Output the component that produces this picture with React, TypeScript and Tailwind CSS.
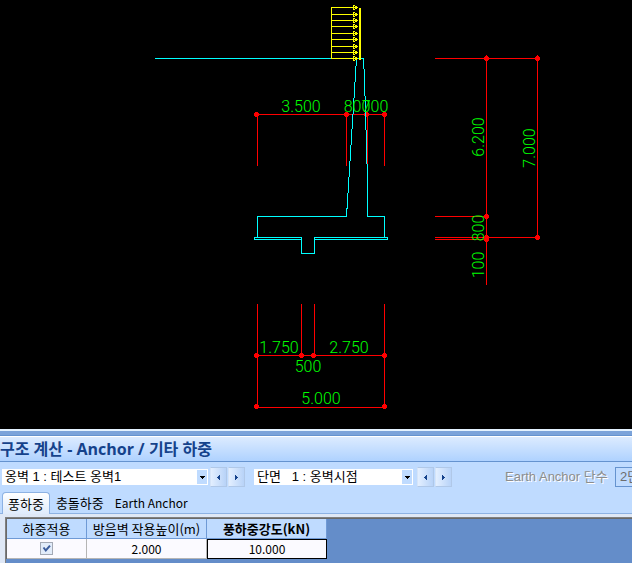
import { useState } from 'react';
import type { ReactNode } from 'react';

type Point = [number, number];

const WIND_ROWS = [7, 14, 20, 26, 33, 39, 46, 52, 58];

// x1, y1, x2, y2
const DIM_LINES = [
  // top
  [257, 114, 384, 114],
  [257, 114, 257, 165],
  [346, 114, 346, 165],
  [367, 114, 367, 165],
  [384, 114, 384, 165],
  // bottom
  [257, 355, 384, 355],
  [257, 407, 384, 407],
  [257, 304, 257, 407],
  [301, 304, 301, 355],
  [314, 304, 314, 355],
  [384, 304, 384, 407],
  // right
  [435, 58, 537, 58],
  [435, 216, 486, 216],
  [435, 237, 537, 237],
  [435, 239, 486, 239],
  [486, 55, 486, 284],
  [537, 55, 537, 239],
];

const DIM_DOTS: Point[] = [
  [256, 114], [346, 114], [366, 114], [384, 114],
  [256, 355], [301, 355], [313, 355], [384, 355],
  [256, 406], [384, 406],
  [486, 58], [537, 58], [486, 216], [486, 237], [486, 239], [537, 237],
];

const DIM_LABELS = [
  { x: 301, y: 112, text: '3.500' },
  { x: 357, y: 112, text: '800' },
  { x: 375, y: 112, text: '700' },
  { x: 279, y: 353, text: '1.750' },
  { x: 308, y: 372, text: '500' },
  { x: 349, y: 353, text: '2.750' },
  { x: 321, y: 404, text: '5.000' },
  { x: 484, y: 137, text: '6.200', vertical: true },
  { x: 535, y: 148, text: '7.000', vertical: true },
  { x: 484, y: 228, text: '800', vertical: true },
  { x: 484, y: 265, text: '100', vertical: true },
];

function SectionDrawing() {
  return (
    <svg viewBox="0 0 632 429" className="block h-[429px] w-full shrink-0 bg-black" role="img" aria-label="옹벽 단면">
      <g transform="translate(0.5 0.5)" fill="none" strokeLinecap="square" shapeRendering="crispEdges">
        <g stroke="#ff0000">
          {DIM_LINES.map(([x1, y1, x2, y2], i) => (
            <line key={i} x1={x1} y1={y1} x2={x2} y2={y2} />
          ))}
        </g>
        <g fill="#ff0000">
          {DIM_DOTS.map(([x, y], i) => (
            <path key={i} d={`M${x - 1.5} ${y - 2.5}h3v1h1v3h-1v1h-3v-1h-1v-3h1z`} />
          ))}
        </g>

        {/* Wall, footing, shear key and blinding */}
        <g stroke="#00ffff">
          <path d="M155 58H363L364 78L367 180V216H384V237" />
          <path d="M356 58L346 216H257V237" />
          <path d="M301 237H254V239H301V253H314V239H387V237H314V239M301 237V239" />
        </g>

        {/* Wind load */}
        <g stroke="#ffff00">
          <path d="M331 7V58" />
          {WIND_ROWS.map((y) => (
            <path key={y} d={`M331 ${y}H357M353 ${y - 2}V${y + 2}M354 ${y - 2}V${y - 2}M354 ${y + 2}V${y + 2}M355 ${y - 1}V${y + 1}M356 ${y - 1}V${y + 1}`} />
          ))}
          <path d="M359.5 8V58" strokeWidth={2} />
        </g>
      </g>

      <g fill="#00ff00" fontFamily="Roboto, sans-serif" fontSize={16} fontWeight={300} textAnchor="middle">
        {DIM_LABELS.map(({ x, y, text, vertical }) => (
          <text key={`${x}-${y}`} transform={vertical ? `translate(${x} ${y}) rotate(-90)` : `translate(${x} ${y})`}>
            {text}
          </text>
        ))}
      </g>
    </svg>
  );
}

function Combo({ label, value, className }: { label: string; value: string; className: string }) {
  return (
    <div className={`relative h-4 shrink-0 bg-white ${className}`}>
      <select
        aria-label={label}
        defaultValue={value}
        className="block h-4 w-full appearance-none bg-transparent pl-[3px] font-['Liberation_Sans','Noto_Sans_CJK_KR',sans-serif] text-[13px] leading-4 text-black outline-none"
      >
        <option value={value}>{value}</option>
      </select>
      <span className="pointer-events-none absolute top-px right-px flex h-[14px] w-[10px] items-center justify-center bg-[#bfdbff]">
        <svg width="5" height="3" viewBox="0 0 5 3" shapeRendering="crispEdges">
          <path d="M0 0h5v1h-1v1h-1v1h-1v-1h-1v-1h-1z" fill="#000" />
        </svg>
      </span>
    </div>
  );
}

function Stepper({ label }: { label: string }) {
  const button =
    'flex h-5 w-[17px] items-center justify-center border border-[#b0c8e8] border-l-[#d5e4f8] bg-linear-to-r from-[#e3efff] to-[#b8d3f8]';
  return (
    <div className="flex shrink-0 gap-px">
      <button type="button" aria-label={`이전 ${label}`} className={button}>
        <svg width="3" height="5" viewBox="0 0 3 5" shapeRendering="crispEdges">
          <path d="M3 0v5h-1v-1h-1v-1h-1v-1h1v-1h1v-1z" fill="#15428b" />
        </svg>
      </button>
      <button type="button" aria-label={`다음 ${label}`} className={button}>
        <svg width="3" height="5" viewBox="0 0 3 5" shapeRendering="crispEdges">
          <path d="M0 0v5h1v-1h1v-1h1v-1h-1v-1h-1v-1z" fill="#15428b" />
        </svg>
      </button>
    </div>
  );
}

function HeaderCell({ children, className }: { children: ReactNode; className: string }) {
  return (
    <th className={`h-5 border-r border-b border-[#6f9ad6] bg-[#bfdbff] p-0 text-[13px] leading-[18px] whitespace-nowrap ${className}`}>
      {children}
    </th>
  );
}

const TABS = [
  { name: '풍하중', size: 'text-[13px]' },
  { name: '충돌하중', size: 'text-[13px]' },
  { name: 'Earth Anchor', size: 'text-xs' },
];

export default function App() {
  const [tab, setTab] = useState('풍하중');
  const [applied, setApplied] = useState(true);

  return (
    <div className="flex min-h-screen flex-col overflow-hidden bg-[#bfdbff] font-['Noto_Sans_CJK_KR','Noto_Sans',sans-serif] text-xs text-black">
      <SectionDrawing />

      <div className="h-[7px] shrink-0 border-t-2 border-b border-t-[#e4f2ff] border-b-[#6593cf] bg-[#7ba3da]" />
      <header className="flex h-[26px] shrink-0 items-center border-t border-b border-t-white border-b-[#6593cf] bg-linear-to-b from-[#dcebff] to-[#afd2ff]">
        <h1 className="font-['Open_Sans','Noto_Sans_CJK_KR',sans-serif] text-base leading-5 font-bold whitespace-nowrap text-[#15428b]">
          구조 계산 - Anchor / 기타 하중
        </h1>
      </header>

      <div className="flex shrink-0 items-center overflow-hidden pt-[5px] pl-[2px]">
        <Combo label="옹벽" value="옹벽 1 : 테스트 옹벽1" className="mr-[2px] w-[206px]" />
        <Stepper label="옹벽" />
        <Combo label="단면" value={'단면\u00a0\u00a0 1 : 옹벽시점'} className="mr-1 ml-[9px] w-[159px]" />
        <Stepper label="단면" />
        <label
          htmlFor="anchor-rows"
          className="ml-[53px] w-[110px] shrink-0 font-['Liberation_Sans','Noto_Sans_CJK_KR',sans-serif] text-[13px] leading-5 whitespace-nowrap text-[#8d8d8d] [text-shadow:1px_1px_0_#fff]"
        >
          Earth Anchor 단수
        </label>
        <select
          id="anchor-rows"
          disabled
          className="h-5 w-20 shrink-0 appearance-none border border-[#6593cf] bg-[#bfdbff] pl-1 font-['Liberation_Sans','Noto_Sans_CJK_KR',sans-serif] text-[13px] leading-4 text-[#6d6d6d] opacity-100"
        >
          <option>2단</option>
        </select>
      </div>

      <div role="tablist" className="mt-[5px] flex h-[22px] shrink-0 gap-px border-b border-[#8db2e3] pl-[2px]">
        {TABS.map(({ name, size }) => (
          <button
            key={name}
            type="button"
            role="tab"
            aria-selected={tab === name}
            onClick={() => setTab(name)}
            className={`-mb-px px-[5px] leading-5 whitespace-nowrap ${size} ${
              tab === name ? 'rounded-t-sm border border-b-0 border-[#8db2e3] bg-linear-to-b from-white to-[#dfebfb]' : 'border-b border-[#8db2e3]'
            }`}
          >
            {name}
          </button>
        ))}
      </div>

      <main className="flex flex-1 flex-col bg-[#dfe8f6] pt-[3px] pl-[5px]">
        <div className="flex-1 border-t border-l border-[#808080] bg-[#648dc9]">
          <div className="border-t border-l border-[#696969]">
            <table className="w-80 table-fixed border-separate border-spacing-0">
              <thead>
                <tr>
                  <HeaderCell className="w-20 font-normal">하중적용</HeaderCell>
                  <HeaderCell className="w-[120px] font-normal">방음벽 작용높이(m)</HeaderCell>
                  <HeaderCell className="w-[120px] font-bold">풍하중강도(kN)</HeaderCell>
                </tr>
              </thead>
              <tbody className="bg-[#fbfaff] text-center">
                <tr>
                  <td className="h-5 border-r border-b border-[#b5b5b5] p-0">
                    <span className="relative mx-auto block size-[13px]">
                      <input
                        type="checkbox"
                        aria-label="하중적용"
                        checked={applied}
                        onChange={(e) => setApplied(e.target.checked)}
                        className="block size-[13px] appearance-none border border-[#a3a9b5] bg-[#e2ecfa]"
                      />
                      {applied && (
                        <svg className="pointer-events-none absolute inset-0" width="13" height="13" viewBox="0 0 13 13">
                          <path d="M3.5 5.5l2.3 3L10 3.7" fill="none" stroke="#3b5c9c" strokeWidth="2" />
                        </svg>
                      )}
                    </span>
                  </td>
                  <td className="h-5 border-r border-b border-[#b5b5b5] p-0 leading-[18px]">2.000</td>
                  <td className="h-5 border border-black p-0">
                    <input
                      aria-label="풍하중강도(kN)"
                      defaultValue="10.000"
                      className="block h-[18px] w-full bg-transparent text-center leading-[18px] outline-none"
                    />
                  </td>
                </tr>
              </tbody>
            </table>
          </div>
        </div>
      </main>
    </div>
  );
}
